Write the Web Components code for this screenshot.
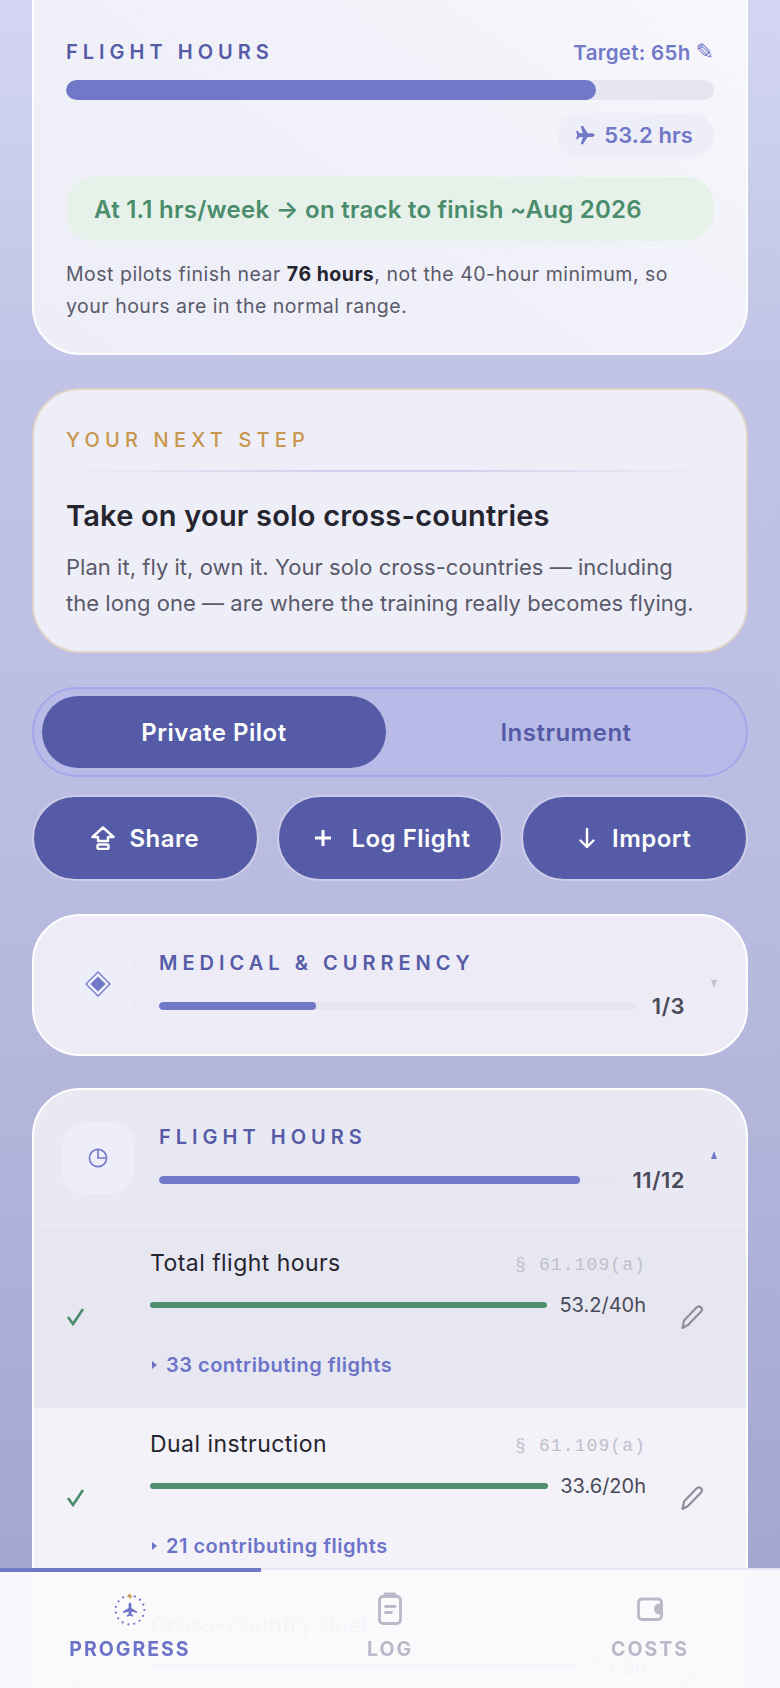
<!DOCTYPE html>
<html lang="en">
<head>
<meta charset="utf-8">
<title>Progress</title>
<style>
    html, body { margin: 0; height: 1688px; overflow: hidden; }
    body {
        font-family: Inter, "Noto Sans", sans-serif;
        background: linear-gradient(180deg, #d3d5f2 0%, #c0c2e6 24%, #bbbce1 50%, #b3b5db 66%, #a9abd4 84%, #a0a3cc 100%);
    }
</style>
</head>
<body>
<app-page>
    <hours-card target="65" hours="53.2">
        At 1.1 hrs/week → on track to finish ~Aug 2026
        <span slot="note">Most pilots finish near <b>76 hours</b>, not the 40-hour minimum, so your hours are in the normal range.</span>
    </hours-card>
    <next-step heading="Take on your solo cross-countries">Plan it, fly it, own it. Your solo cross-countries — including the long one — are where the training really becomes flying.</next-step>
    <track-toggle first="Private Pilot" second="Instrument"></track-toggle>
    <action-row>
        <action-button label="Share">
            <svg width="24" height="24" viewBox="0 0 24 24" fill="none" stroke="#fff" stroke-width="2.4" stroke-linejoin="round"><path d="M12 1.5 22.5 11H17v4H7v-4H1.5Z"/><rect x="6.5" y="18.5" width="11" height="4.5" rx="1.6"/></svg>
        </action-button>
        <action-button label="Log Flight" gap="19" style="padding-left: 5px">
            <svg width="18" height="18" viewBox="0 0 18 18" stroke="#fff" stroke-width="3"><path d="M9 1v16M1 9h16"/></svg>
        </action-button>
        <action-button label="Import" gap="16">
            <svg width="18" height="22" viewBox="0 0 18 22" fill="none" stroke="#fff" stroke-width="2.4" stroke-linecap="round" stroke-linejoin="round"><path d="M9 2v18M2.5 13.5 9 20l6.5-6.5"/></svg>
        </action-button>
    </action-row>
    <req-section heading="Medical &amp; Currency" count="1/3" percent="33">
        <svg slot="icon" width="26" height="26" viewBox="0 0 26 26"><path d="M13 1 25 13 13 25 1 13Z" fill="none" stroke="#7278c8" stroke-width="1.3"/><path d="M13 5.5 20.5 13 13 20.5 5.5 13Z" fill="#7278c8"/></svg>
    </req-section>
    <req-section heading="Flight Hours" count="11/12" percent="92" open>
        <svg slot="icon" width="20" height="20" viewBox="0 0 20 20" fill="none" stroke="#7278c8" stroke-width="1.6"><circle cx="10" cy="10" r="8.6"/><path d="M10 1.5V10h8.5"/></svg>
        <req-row name="Total flight hours" cite="§ 61.109(a)" value="53.2/40h" flights="33 contributing flights" highlight></req-row>
        <req-row name="Dual instruction" cite="§ 61.109(a)" value="33.6/20h" flights="21 contributing flights"></req-row>
        <req-row name="Cross-country dual" cite="§ 61.109(a)(1)" value="7.9/3h"></req-row>
    </req-section>
</app-page>
<bottom-nav percent="33.4">
    <nav-tab label="Progress" active>
        <svg width="34" height="34" viewBox="0 0 34 34"><circle cx="17" cy="18" r="14.4" fill="none" stroke="#6d74c8" stroke-width="2.2" stroke-linecap="round" stroke-dasharray="0 6.03"/><path d="M17 1l1 2.4 2.4.9-2.4.9-1 2.4-1-2.4-2.4-.9 2.4-.9Z" fill="#d9a24c"/><path d="M17 10.5c.9 0 1.4 1.4 1.4 2.8v2.6l5.6 3.5v1.7l-5.6-1.6v2.6l1.7 1.3v1.3L17 23.8l-3.1.9v-1.3l1.7-1.3v-2.6L10 21.1v-1.7l5.6-3.5v-2.6c0-1.4.5-2.8 1.4-2.8Z" fill="#6d74c8"/></svg>
    </nav-tab>
    <nav-tab label="Log">
        <svg width="34" height="34" viewBox="0 0 34 34" fill="none" stroke="#b9b9c9" stroke-width="2.8" stroke-linecap="round"><rect x="6.5" y="4.5" width="21" height="27" rx="3.5"/><path d="M12.5 2.5h9" stroke-width="4"/><path d="M12.5 14.5h9.5M12.5 20.5h6"/></svg>
    </nav-tab>
    <nav-tab label="Costs">
        <svg width="34" height="34" viewBox="0 0 34 34" fill="none"><rect x="5.5" y="7" width="23" height="20.5" rx="3.5" stroke="#b9b9c9" stroke-width="2.8"/><path d="M30 11.5h-3.5a5.5 5.5 0 0 0 0 11H30Z" fill="#b9b9c9"/></svg>
    </nav-tab>
</bottom-nav>

<script>
class AppPage extends HTMLElement {
    constructor() {
        super();
        this.attachShadow({ mode: 'open' });
        this.shadowRoot.innerHTML = `
            <style>
                :host { display: flex; flex-direction: column; padding: 0 32px; margin-top: -60px; }
            </style>
            <slot></slot>
        `;
    }
}

class HoursCard extends HTMLElement {
    constructor() {
        super();
        this.attachShadow({ mode: 'open' });
        this.shadowRoot.innerHTML = `
            <style>
                :host {
                    display: block; box-sizing: border-box; height: 415px; padding: 96px 32px 0;
                    border: 2px solid #fff; border-radius: 48px;
                    background: linear-gradient(215deg, #f8f8fc 0%, #f1f1f9 45%, #eeeef8 100%);
                }
                header { display: flex; justify-content: space-between; align-items: center; height: 28px; }
                h2 { margin: 0; font-size: 20px; font-weight: 600; letter-spacing: 5px; color: #555ba6; text-transform: uppercase; }
                .target { display: flex; align-items: center; gap: 5px; font-size: 20.5px; font-weight: 600; letter-spacing: .3px; color: #7278c8; }
                .target i { font: 22px/1 "DejaVu Sans", sans-serif; letter-spacing: 0; }
                .track { height: 20px; margin-top: 14px; border-radius: 10px; background: #e6e5f0; overflow: hidden; }
                .fill { height: 100%; border-radius: 10px; background: #7278c8; }
                .pill-row { display: flex; justify-content: flex-end; margin-top: 13px; }
                .pill { height: 44px; display: flex; align-items: center; gap: 8px; padding: 0 21px 0 18px; border-radius: 22px; background: #eeeef9; color: #7278c8; font-size: 22px; font-weight: 600; letter-spacing: .1px; }
                .pill svg { display: block; }
                .status { height: 64px; margin-top: 20px; padding: 0 28px; display: flex; align-items: center; border-radius: 28px; background: #e6f1ea; color: #4a8c6c; font-size: 24px; font-weight: 600; letter-spacing: .25px; }
                .note { margin-top: 17px; padding-right: 24px; font-size: 19.5px; letter-spacing: .5px; line-height: 32px; color: #5a5a6a; }
                ::slotted(span) { display: block; }
            </style>
            <header>
                <h2>Flight Hours</h2>
                <span class="target"></span>
            </header>
            <div class="track"><div class="fill"></div></div>
            <div class="pill-row"><div class="pill"></div></div>
            <div class="status"><slot></slot></div>
            <div class="note"><slot name="note"></slot></div>
        `;
    }

    connectedCallback() {
        const target = Number(this.getAttribute('target'));
        const hours = Number(this.getAttribute('hours'));
        const shadow = this.shadowRoot;
        shadow.querySelector('.target').innerHTML = `<span>Target: ${target}h</span><i>✎</i>`;
        shadow.querySelector('.fill').style.width = `${hours / target * 100}%`;
        shadow.querySelector('.pill').innerHTML = `<svg width="21" height="21" viewBox="9 10 16 15.5"><path transform="rotate(90 17 17.5)" d="M17 10.5c.9 0 1.4 1.4 1.4 2.8v2.6l5.6 3.5v1.7l-5.6-1.6v2.6l1.7 1.3v1.3L17 23.8l-3.1.9v-1.3l1.7-1.3v-2.6L10 21.1v-1.7l5.6-3.5v-2.6c0-1.4.5-2.8 1.4-2.8Z" fill="#7278c8"/></svg>${hours} hrs`;
        this.querySelector('b').style.color = '#25252f';
    }
}

class NextStep extends HTMLElement {
    constructor() {
        super();
        this.attachShadow({ mode: 'open' });
        this.shadowRoot.innerHTML = `
            <style>
                :host {
                    display: block; box-sizing: border-box; height: 265px; margin-top: 33px; padding: 38px 32px 0;
                    border: 2px solid #e0d3c8; border-radius: 48px; background: #eeeef8;
                }
                .label { font-size: 20px; line-height: 24px; font-weight: 500; letter-spacing: 5.2px; color: #c8964e; }
                hr { height: 2px; margin: 18px 0 0; border: 0; background: linear-gradient(90deg, transparent, #d0d0ea 40%, #d0d0ea 60%, transparent); }
                h3 { margin: 25px 0 0; font-size: 29px; letter-spacing: .2px; line-height: 38px; font-weight: 600; color: #25252f; }
                p { margin: 14px 0 0; padding-right: 16px; font-size: 22px; letter-spacing: .03px; line-height: 36px; color: #5a5a6a; }
            </style>
            <div class="label">YOUR NEXT STEP</div>
            <hr>
            <h3></h3>
            <p><slot></slot></p>
        `;
    }

    connectedCallback() {
        this.shadowRoot.querySelector('h3').textContent = this.getAttribute('heading');
    }
}

class TrackToggle extends HTMLElement {
    constructor() {
        super();
        this.attachShadow({ mode: 'open' });
        this.shadowRoot.innerHTML = `
            <style>
                :host {
                    display: grid; grid-template-columns: 1fr 1fr; gap: 8px; box-sizing: border-box;
                    height: 90px; margin-top: 34px; padding: 7px 8px;
                    border: 2px solid #a2a8e8; border-radius: 45px; background: #b8bae7;
                    font-size: 24px; letter-spacing: .5px; font-weight: 600; color: #555ba6;
                }
                div { display: flex; align-items: center; justify-content: center; border-radius: 36px; }
                .active { background: #555ba6; color: #fff; }
            </style>
            <div class="active"></div>
            <div></div>
        `;
    }

    connectedCallback() {
        const [first, second] = this.shadowRoot.querySelectorAll('div');
        first.textContent = this.getAttribute('first');
        second.textContent = this.getAttribute('second');
    }
}

class ActionRow extends HTMLElement {
    constructor() {
        super();
        this.attachShadow({ mode: 'open' });
        this.shadowRoot.innerHTML = `
            <style>
                :host { display: grid; grid-template-columns: repeat(3, 1fr); gap: 18px; margin-top: 18px; }
            </style>
            <slot></slot>
        `;
    }
}

class ActionButton extends HTMLElement {
    constructor() {
        super();
        this.attachShadow({ mode: 'open' });
        this.shadowRoot.innerHTML = `
            <style>
                :host {
                    display: flex; align-items: center; justify-content: center; gap: 14px; box-sizing: border-box;
                    height: 86px; border: 2px solid #cccde8; border-radius: 43px; background: #555ba6;
                    color: #fff; font-size: 24px; letter-spacing: .5px; font-weight: 600;
                }
                ::slotted(svg) { display: block; }
            </style>
            <slot></slot><span></span>
        `;
    }

    connectedCallback() {
        this.shadowRoot.querySelector('span').textContent = this.getAttribute('label');
        if (this.hasAttribute('gap')) this.style.gap = `${this.getAttribute('gap')}px`;
    }
}

class ReqSection extends HTMLElement {
    constructor() {
        super();
        this.attachShadow({ mode: 'open' });
        this.shadowRoot.innerHTML = `
            <style>
                :host {
                    display: block; margin-top: 32px; border: 2px solid #fff; border-radius: 48px;
                    background: #ecebf6; overflow: hidden;
                }
                :host(:nth-of-type(1)) { margin-top: 33px; }
                :host([open]) { background: #e9e9f4; }
                .head { display: flex; align-items: center; box-sizing: border-box; height: 138px; padding: 32px 29px 34px 28px; }
                :host([open]) .head { height: 136px; padding-bottom: 32px; }
                .icon { flex: none; width: 72px; height: 72px; display: flex; align-items: center; justify-content: center; border-radius: 24px; background: #eeeefa; }
                ::slotted(svg) { display: block; }
                .body { flex: 1; min-width: 0; margin-left: 25px; padding-top: 4px; }
                h3 { margin: 0; font-size: 20px; line-height: 24px; font-weight: 600; letter-spacing: 5px; color: #555ba6; text-transform: uppercase; }
                .line { display: flex; align-items: center; gap: 16px; margin-top: 16px; height: 30px; }
                .track { flex: 1; height: 8px; border-radius: 4px; background: #e6e5f0; overflow: hidden; }
                .fill { height: 100%; border-radius: 4px; background: #7278c8; }
                .count { margin-right: 2px; font-size: 22px; font-weight: 600; letter-spacing: .5px; color: #4a4a58; }
                .chevron { flex: none; width: 0; height: 0; margin-left: 24px; border-left: 3.5px solid transparent; border-right: 3.5px solid transparent; border-top: 8px solid #c0c0cc; }
                :host([open]) .chevron { margin-top: -6px; border-top: 0; border-bottom: 8px solid #7278c8; }
            </style>
            <div class="head">
                <div class="icon"><slot name="icon"></slot></div>
                <div class="body">
                    <h3></h3>
                    <div class="line">
                        <div class="track"><div class="fill"></div></div>
                        <span class="count"></span>
                    </div>
                </div>
                <div class="chevron"></div>
            </div>
            <slot></slot>
        `;
    }

    connectedCallback() {
        const shadow = this.shadowRoot;
        shadow.querySelector('h3').textContent = this.getAttribute('heading');
        shadow.querySelector('.count').textContent = this.getAttribute('count');
        shadow.querySelector('.fill').style.width = `${this.getAttribute('percent')}%`;
    }
}

class ReqRow extends HTMLElement {
    constructor() {
        super();
        this.attachShadow({ mode: 'open' });
        this.shadowRoot.innerHTML = `
            <style>
                :host {
                    display: grid; grid-template-columns: 84px 496px 22px; column-gap: 0; align-items: center;
                    box-sizing: border-box; min-height: 181px; padding: 0 32px; background: #f2f2f8;
                }
                :host([highlight]) { background: #e7e7f2; border-top: 1px solid #ebebf5; }
                .check { display: block; margin-top: -2px; }
                .main { align-self: start; padding: 22px 0 31px; }
                .top { display: flex; justify-content: space-between; align-items: center; height: 28px; }
                .name { font-size: 23px; letter-spacing: .45px; color: #25252f; }
                .cite { margin-top: 4px; font: 18px "Liberation Mono", monospace; letter-spacing: 1.1px; color: #c0c0cc; }
                .line { display: flex; align-items: center; gap: 12px; height: 24px; margin-top: 16px; }
                .track { flex: 1; height: 6px; border-radius: 3px; background: #4f8f6f; }
                .value { font-size: 20px; color: #4a4a58; }
                .flights { display: flex; align-items: center; gap: 9px; height: 24px; margin-top: 36px; font-size: 20px; letter-spacing: .5px; font-weight: 600; color: #6d74c8; }
                .flights i { width: 0; height: 0; border-top: 4px solid transparent; border-bottom: 4px solid transparent; border-left: 5px solid #6d74c8; margin-left: 2px; }
                .pencil { grid-column: 3; margin: -2px 0 0 34px; display: block; }
            </style>
            <svg class="check" width="20" height="18" viewBox="0 0 20 18" fill="none" stroke="#4a8c6c" stroke-width="2.6"><path d="M2 9l5 7L17 1"/></svg>
            <div class="main">
                <div class="top"><span class="name"></span><span class="cite"></span></div>
                <div class="line"><div class="track"></div><span class="value"></span></div>
                <div class="flights"><i></i><span></span></div>
            </div>
            <svg class="pencil" width="24" height="24" viewBox="0 0 24 24" fill="none" stroke="#8e8e9a" stroke-width="2.2" stroke-linejoin="round"><path d="M2.5 23 4 15.5 16.5 2.5c1.5-1.5 3-1.5 4.5-.2s1.3 3-.2 4.5L8 20Z"/></svg>
        `;
    }

    connectedCallback() {
        const shadow = this.shadowRoot;
        shadow.querySelector('.name').textContent = this.getAttribute('name');
        shadow.querySelector('.cite').textContent = this.getAttribute('cite');
        shadow.querySelector('.value').textContent = this.getAttribute('value');
        const flights = this.getAttribute('flights');
        if (flights) shadow.querySelector('.flights span').textContent = flights;
        else shadow.querySelector('.flights').remove();
    }
}

class BottomNav extends HTMLElement {
    constructor() {
        super();
        this.attachShadow({ mode: 'open' });
        this.shadowRoot.innerHTML = `
            <style>
                :host {
                    display: block; position: fixed; left: 0; right: 0; bottom: 0; height: 120px;
                    background: rgba(250, 250, 253, .975);
                    border-top: 2px solid #e4e4f2; box-sizing: border-box;
                }
                .bar { position: absolute; left: 0; top: -2px; height: 4px; background: #7278c8; }
                .tabs { display: grid; grid-template-columns: repeat(3, 1fr); padding-top: 22px; }
            </style>
            <div class="bar"></div>
            <div class="tabs"><slot></slot></div>
        `;
    }

    connectedCallback() {
        this.shadowRoot.querySelector('.bar').style.width = `${this.getAttribute('percent')}%`;
    }
}

class NavTab extends HTMLElement {
    constructor() {
        super();
        this.attachShadow({ mode: 'open' });
        this.shadowRoot.innerHTML = `
            <style>
                :host {
                    display: flex; flex-direction: column; align-items: center;
                    font-size: 19.5px; font-weight: 700; letter-spacing: 2px; color: #b9b9c9; text-transform: uppercase;
                }
                :host([active]) { color: #6d74c8; }
                ::slotted(svg) { display: block; }
                span { margin-top: 11px; line-height: 24px; }
            </style>
            <slot></slot>
            <span></span>
        `;
    }

    connectedCallback() {
        this.shadowRoot.querySelector('span').textContent = this.getAttribute('label');
    }
}

customElements.define('app-page', AppPage);
customElements.define('hours-card', HoursCard);
customElements.define('next-step', NextStep);
customElements.define('track-toggle', TrackToggle);
customElements.define('action-row', ActionRow);
customElements.define('action-button', ActionButton);
customElements.define('req-section', ReqSection);
customElements.define('req-row', ReqRow);
customElements.define('bottom-nav', BottomNav);
customElements.define('nav-tab', NavTab);
</script>
</body>
</html>
